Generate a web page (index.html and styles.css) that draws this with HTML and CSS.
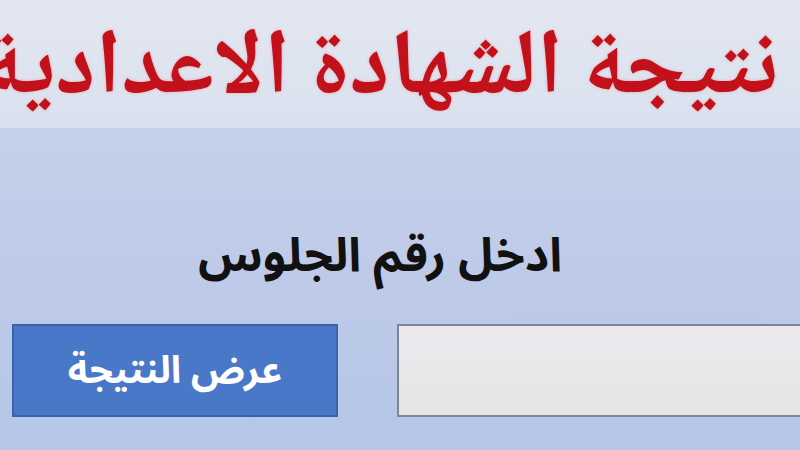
FILE: index.html
```html
<!DOCTYPE html>
<html lang="ar" dir="rtl">
<head>
<meta charset="utf-8">
<link rel="stylesheet" href="styles.css">
</head>
<body>
<div class="page">
  <header class="band">
    <h1 class="title">نتيجة الشهادة الاعدادية</h1>
  </header>
  <main class="panel">
    <p class="label">ادخل رقم الجلوس</p>
    <div class="row">
      <input class="field" type="text" aria-label="رقم الجلوس">
      <button class="btn" type="button">عرض النتيجة</button>
    </div>
  </main>
</div>
</body>
</html>
```
FILE: styles.css
```css
html, body {
  margin: 0;
  padding: 0;
}
body {
  width: 800px;
  height: 450px;
  overflow: hidden;
  font-family: "Noto Sans Arabic", "DejaVu Sans", sans-serif;
  background: #bccbe9;
}
.page {
  display: flex;
  flex-direction: column;
  height: 450px;
}
.band {
  height: 128px;
  background: linear-gradient(to bottom, #e3e7f1, #dae1ee);
  display: flex;
  justify-content: flex-start;
  align-items: flex-start;
  overflow: hidden;
}
.title {
  margin: 0;
  padding-right: 22px;
  white-space: nowrap;
  font-family: "Noto Naskh Arabic", "Noto Sans Arabic", sans-serif;
  font-size: 92px;
  font-weight: bold;
  line-height: 146px;
  color: #c2111b;
  text-shadow: 0 0 3px rgba(235, 120, 120, 0.6);
}
.panel {
  flex: 1;
  background: linear-gradient(to bottom, #c4d1ea 0%, #bfcbe8 40%, #b5c6e8 100%);
  display: flex;
  flex-direction: column;
}
.label {
  margin: 98px 0 0 0;
  padding-right: 238px;
  font-family: "Noto Sans Arabic", "DejaVu Sans", sans-serif;
  font-size: 47px;
  font-weight: bold;
  line-height: 60px;
  color: #111;
}
.row {
  margin-top: 38px;
  display: flex;
  gap: 59px;
  padding-left: 12px;
  margin-right: -6px;
}
.field {
  flex: 1;
  height: 93px;
  box-sizing: border-box;
  border: 2px solid #7d8597;
  background: linear-gradient(to bottom, #eceaee, #e7e4e4);
  margin: 0;
}
.btn {
  width: 326px;
  height: 93px;
  box-sizing: border-box;
  border: 2px solid #3a63a8;
  background: #4a78c8;
  color: #fff;
  font-family: "Noto Sans Arabic", "DejaVu Sans", sans-serif;
  font-size: 38px;
  font-weight: bold;
  margin: 0;
  padding: 0;
}
```
